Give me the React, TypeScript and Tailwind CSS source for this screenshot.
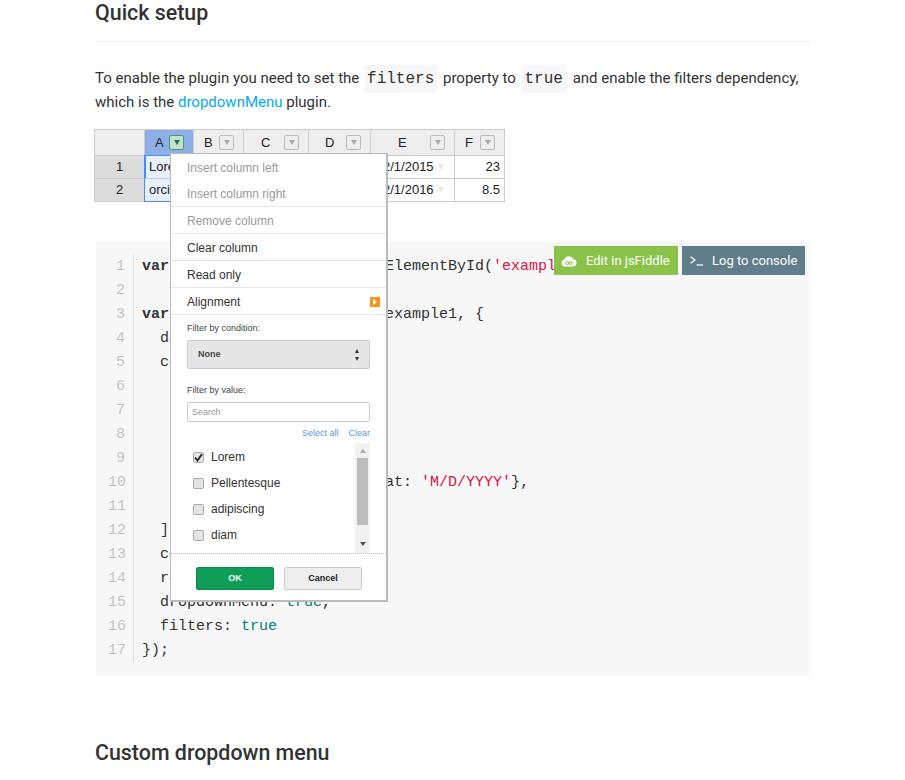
import React from 'react';

const mono = "font-['Liberation_Mono',monospace]";

const COLS = [
  { name: 'B', w: 'w-[50px]', textPos: 'pl-[10px]' },
  { name: 'C', w: 'w-[65px]', textPos: 'pl-[17px]' },
  { name: 'D', w: 'w-[62px]', textPos: 'pl-[16px]' },
  { name: 'E', w: 'w-[84px]', textPos: 'pl-[27px]' },
  { name: 'F', w: 'w-[50px]', textPos: 'pl-[10px]' },
];

const CODE_LINES: React.ReactNode[] = [
  <><b>var</b> example1 = document.getElementById(<span className="text-[#dd1144]">'example1'</span>);</>,
  <></>,
  <><b>var</b> hot = <b>new</b> Handsontable(example1, {'{'}</>,
  <>  data: getData(),</>,
  <>  columns: [</>,
  <>    {'{'}type: <span className="text-[#dd1144]">'text'</span>{'}'},</>,
  <>    {'{'}type: <span className="text-[#dd1144]">'text'</span>{'}'},</>,
  <>    {'{'}type: <span className="text-[#dd1144]">'text'</span>{'}'},</>,
  <>    {'{'}type: <span className="text-[#dd1144]">'text'</span>{'}'},</>,
  <>    {'{'}type: <span className="text-[#dd1144]">'date'</span>, dateFormat: <span className="text-[#dd1144]">'M/D/YYYY'</span>{'}'},</>,
  <>    {'{'}type: <span className="text-[#dd1144]">'numeric'</span>{'}'}</>,
  <>  ],</>,
  <>  colHeaders: <span className="text-[#008080]">true</span>,</>,
  <>  rowHeaders: <span className="text-[#008080]">true</span>,</>,
  <>  dropdownMenu: <span className="text-[#008080]">true</span>,</>,
  <>  filters: <span className="text-[#008080]">true</span></>,
  <>{'}'});</>,
];

function FilterBtn({ active }: { active?: boolean }) {
  return (
    <span className={`w-[15px] h-[15px] rounded-[2px] border flex items-center justify-center ${active ? 'border-[#4b9a6b] bg-[#c5e0d0]' : 'border-[#bbb] bg-[#eee]'}`}>
      <span className={`w-0 h-0 border-l-[3px] border-r-[3px] border-t-[5px] border-l-transparent border-r-transparent ${active ? 'border-t-[#1a7f45]' : 'border-t-[#aaa]'}`} />
    </span>
  );
}

function MenuItem({ label, disabled, sep, tall }: { label: string; disabled?: boolean; sep?: boolean; tall?: boolean }) {
  return (
    <div className={`${tall ? 'h-[27px]' : 'h-[26px]'} pl-4 pt-px flex items-center text-[12px] ${disabled ? 'text-[#999]' : 'text-[#333]'} ${sep ? 'border-b border-[#e6e6e6]' : ''}`}>
      {label}
    </div>
  );
}

function CheckRow({ label, checked }: { label: string; checked?: boolean }) {
  return (
    <div className="h-[26px] flex items-center pl-[22px] text-[12px] text-[#333]">
      <span className="w-[11px] h-[11px] rounded-[2px] border border-[#aaa] bg-[#e4e4e4] flex items-center justify-center mr-[7px]">
        {checked && (
          <svg width="9" height="9" viewBox="0 0 9 9">
            <path d="M1 4.5 L3.5 7.5 L8 1" fill="none" stroke="#222" strokeWidth="1.8" />
          </svg>
        )}
      </span>
      {label}
    </div>
  );
}

function DropdownMenu() {
  return (
    <div className="absolute left-[76px] top-[24px] w-[218px] h-[449px] bg-white border border-[#bbb] border-r-2 border-b-2 font-['Liberation_Sans',sans-serif]">
      <MenuItem label="Insert column left" disabled />
      <MenuItem label="Insert column right" disabled sep tall />
      <MenuItem label="Remove column" disabled sep tall />
      <MenuItem label="Clear column" sep tall />
      <MenuItem label="Read only" sep tall />
      <div className="h-[27px] pl-4 pr-[6px] pt-px flex items-center justify-between text-[12px] text-[#333] border-b border-[#e6e6e6]">
        Alignment
        <span className="w-[10px] h-[10px] bg-[#f7941d] flex items-center justify-center">
          <span className="w-0 h-0 border-t-[3px] border-b-[3px] border-l-[4px] border-t-transparent border-b-transparent border-l-white" />
        </span>
      </div>

      <div className="px-4 pt-[7px]">
        <div className="text-[9px] leading-[12px] text-[#444]">Filter by condition:</div>
        <div className="mt-[6px] h-[29px] bg-[#e6e6e6] border border-[#ccc] rounded-[2px] flex items-center justify-between pl-[10px] pr-[10px]">
          <span className="text-[9px] font-bold text-[#444]">None</span>
          <span className="flex flex-col gap-[4px]">
            <span className="w-0 h-0 border-l-[2.5px] border-r-[2.5px] border-b-[4px] border-l-transparent border-r-transparent border-b-[#333]" />
            <span className="w-0 h-0 border-l-[2.5px] border-r-[2.5px] border-t-[4px] border-l-transparent border-r-transparent border-t-[#333]" />
          </span>
        </div>
        <div className="mt-[15px] text-[9px] leading-[12px] text-[#444]">Filter by value:</div>
        <div className="mt-[6px] h-[20px] border border-[#ccc] rounded-[2px] flex items-center pl-[4px] pt-px text-[9px] text-[#999]">Search</div>
        <div className="mt-[5px] h-[12px] flex justify-end gap-[10px] text-[9px] leading-[12px] text-[#5b9bd5]">
          <span>Select all</span>
          <span>Clear</span>
        </div>
      </div>

      <div className="relative h-[110px] mt-[4px]">
        <div className="pt-[1px]">
          <CheckRow label="Lorem" checked />
          <CheckRow label="Pellentesque" />
          <CheckRow label="adipiscing" />
          <CheckRow label="diam" />
        </div>
        <div className="absolute right-[16px] top-0 w-[15px] h-[110px] bg-[#f1f1f1] flex flex-col items-center">
          <span className="mt-[6px] w-0 h-0 border-l-[3.5px] border-r-[3.5px] border-b-[4px] border-l-transparent border-r-transparent border-b-[#aaa]" />
          <span className="mt-[5px] w-[11px] h-[67px] bg-[#bdbdbd]" />
          <span className="mt-[17px] w-0 h-0 border-l-[3.5px] border-r-[3.5px] border-t-[4px] border-l-transparent border-r-transparent border-t-[#505050]" />
        </div>
      </div>

      <div className="border-t border-dotted border-[#bbb] pt-[13px] pl-[25px] flex gap-[10px]">
        <div className="w-[78px] h-[23px] pt-px bg-[#0f9d58] border border-[#0c8a4c] rounded-[2px] flex items-center justify-center text-[9px] font-bold text-white">OK</div>
        <div className="w-[78px] h-[23px] pt-px bg-[#eee] border border-[#ccc] rounded-[2px] flex items-center justify-center text-[9px] font-bold text-[#222]">Cancel</div>
      </div>
    </div>
  );
}

function DataTable() {
  return (
    <div className="relative z-10 -ml-px w-[411px] h-[73px] font-['Liberation_Sans',sans-serif] text-[13px] text-[#222]">
      <div className="border-t border-l border-[#ccc] w-[411px]">
        <div className="flex h-[26px]">
          <div className="w-[50px] bg-[#eee] border-r border-b border-[#ccc]" />
          <div className="w-[49px] bg-[#8eb0e7] border-r border-b border-[#ccc] flex items-center justify-between pl-[10px] pr-[9px]">
            A <FilterBtn active />
          </div>
          {COLS.map((c) => (
            <div key={c.name} className={`${c.w} bg-[#eee] border-r border-b border-[#ccc] flex items-center justify-between pr-[9px] ${c.textPos}`}>
              {c.name} <FilterBtn />
            </div>
          ))}
        </div>
        {[
          { n: '1', a: 'Lorem', e: '2/1/2015', f: '23' },
          { n: '2', a: 'orci', e: '2/1/2016', f: '8.5' },
        ].map((r) => (
          <div key={r.n} className="flex h-[23px]">
            <div className="w-[49px] bg-[#dcdcdc] border-b border-[#ccc] flex items-center justify-center">{r.n}</div>
            <div className={`w-[50px] bg-[#e8f0fe] border-r border-[#4b89ff] flex items-center overflow-hidden ${r.n === '1' ? '-mt-px h-[24px] border-t border-l-2 border-b border-b-[#ccc] pl-[3px]' : 'border-l border-b pl-[4px]'}`}>{r.a}</div>
            <div className="w-[50px] border-r border-b border-[#ccc]" />
            <div className="w-[65px] border-r border-b border-[#ccc]" />
            <div className="w-[62px] border-r border-b border-[#ccc]" />
            <div className="w-[84px] border-r border-b border-[#ccc] flex items-center pl-[12px]">
              {r.e}
              <span className="ml-[4px] w-0 h-0 border-l-[3.5px] border-r-[3.5px] border-t-[6px] border-l-transparent border-r-transparent border-t-[#e8e8e8]" />
            </div>
            <div className="w-[50px] border-r border-b border-[#ccc] flex items-center justify-end pr-[4px]">{r.f}</div>
          </div>
        ))}
      </div>
      <DropdownMenu />
    </div>
  );
}

function CodeBlock() {
  return (
    <div className="relative mt-[40px] ml-px w-[713px] h-[434px] bg-[#f7f7f7] pt-[13px] pl-[12px]">
      <div className={`${mono} text-[15px] leading-[24px] text-[#333] flex overflow-hidden`}>
        <div className="w-[17px] pr-[8px] text-right text-[#c5c5c5] shrink-0 box-content border-r border-[#e0e0e0]">
          {CODE_LINES.map((_, i) => (
            <div key={i}>{i + 1}</div>
          ))}
        </div>
        <div className="pl-2 whitespace-pre">
          {CODE_LINES.map((line, i) => (
            <div key={i} className="h-[24px]">{line}</div>
          ))}
        </div>
      </div>
      <div className="absolute top-[4px] right-[4px] flex gap-[4px] font-['Roboto',sans-serif] text-[13px] text-white">
        <div className="w-[124px] h-[29px] bg-[#8bc34a] flex items-center pl-[7px] gap-[9px]">
          <svg width="16" height="12" viewBox="0 0 16 12">
            <path d="M4 11.5 A3.5 3.5 0 0 1 3.3 4.6 A4.8 4.8 0 0 1 12.3 4 A3.8 3.8 0 0 1 12.3 11.5 Z" fill="#fff" />
            <circle cx="6.3" cy="8" r="1.5" fill="none" stroke="#8bc34a" strokeWidth="1" />
            <circle cx="9.7" cy="8" r="1.5" fill="none" stroke="#8bc34a" strokeWidth="1" />
          </svg>
          Edit in jsFiddle
        </div>
        <div className="w-[123px] h-[29px] bg-[#607d8b] flex items-center pl-[8px] gap-[9px]">
          <svg width="13" height="10" viewBox="0 0 13 10" fill="none" stroke="#fff" strokeWidth="1.2">
            <path d="M0.5 0.8 L5 4 L0.5 7.2" />
            <path d="M6.5 9 H13" />
          </svg>
          Log to console
        </div>
      </div>
    </div>
  );
}

export default function App() {
  return (
    <div className="h-[780px] overflow-hidden bg-white font-['Roboto',sans-serif] text-[#333]">
      <div className="ml-[95px] w-[716px]">
        <h2 className="text-[21.4px] leading-[26px] font-medium text-[#333] pb-[15px] border-b border-[#eee]">Quick setup</h2>
        <p className="mt-[24px] mb-[15px] text-[15px] leading-[24px]">
          To enable the plugin you need to set the{' '}
          <code className={`${mono} text-[16px] leading-none bg-[#f7f7f7] px-[3px] py-[5px] ml-px mr-[2px]`}>filters</code>{' '}
          property to{' '}
          <code className={`${mono} text-[16px] leading-none bg-[#f7f7f7] px-[3px] py-[5px] ml-[2px] mr-[3px]`}>true</code>{' '}
          and enable the filters dependency, which is the <span className="text-[#03a9f4]">dropdownMenu</span> plugin.
        </p>
        <DataTable />
        <CodeBlock />
        <h2 className="mt-[65px] text-[21.4px] leading-[24px] font-medium text-[#333]">Custom dropdown menu</h2>
      </div>
    </div>
  );
}
